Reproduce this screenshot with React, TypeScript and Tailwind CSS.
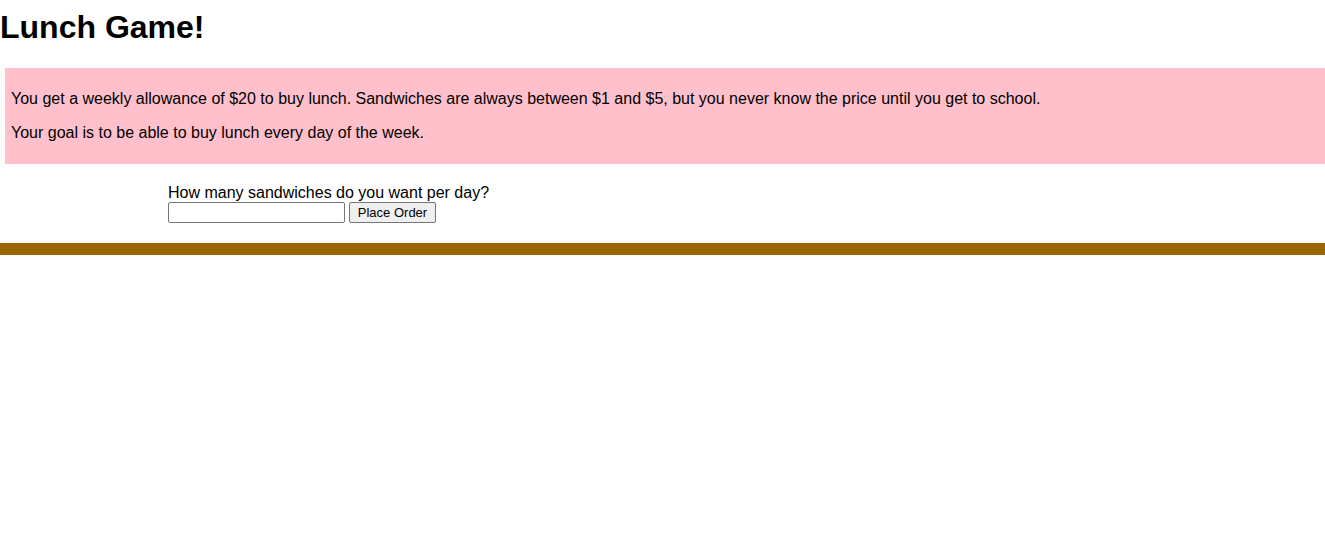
export default function App() {
  return (
    <div className="min-h-[541px] bg-white font-['Liberation_Sans',Arial,sans-serif] text-black">
      <h1 className="pt-[9px] text-[32px] font-bold leading-[37px]">Lunch Game!</h1>

      {/* Rules */}
      <div className="ml-[5px] mt-[22px] bg-[#ffc0cb] px-[6px] py-[6px] text-base">
        <p className="my-4 leading-[18px]">
          You get a weekly allowance of $20 to buy lunch. Sandwiches are always between $1 and $5, but you never know
          the price until you get to school.
        </p>
        <p className="my-4 leading-[18px]">Your goal is to be able to buy lunch every day of the week.</p>
      </div>

      {/* Order form */}
      <div className="ml-[168px] mt-[20px] text-base">
        <div className="leading-[18px]">How many sandwiches do you want per day?</div>
        <div className="flex items-center gap-[4px]">
          <input
            type="text"
            className="h-[21px] w-[177px] rounded-[2px] border border-[#767676] bg-white px-[2px] text-[13px]"
          />
          <button className="h-[21px] w-[87px] rounded-[2px] border border-[#767676] bg-[#efefef] text-[13px] leading-none">
            Place Order
          </button>
        </div>
      </div>

      <div className="mt-[20px] h-[12px] bg-[#996600]" />
    </div>
  );
}
